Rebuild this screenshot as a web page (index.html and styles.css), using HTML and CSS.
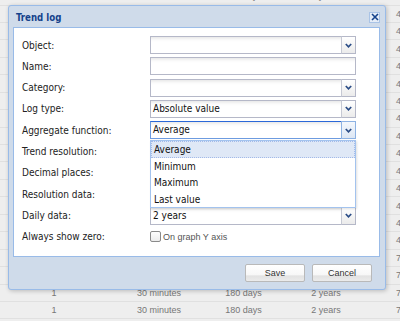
FILE: index.html
```html
<!DOCTYPE html>
<html>
<head>
<meta charset="utf-8">
<link rel="stylesheet" href="styles.css">
</head>
<body>
<div class="grid">
  <div class="row"><span class="c1">2</span><span class="c2">5 minutes</span><span class="c3">180 days</span><span class="c4">2 years</span><span class="c5">4</span></div>
  <div class="row"><span class="c1"></span><span class="c2"></span><span class="c3"></span><span class="c4"></span><span class="c5">4</span></div>
  <div class="row"><span class="c1"></span><span class="c2"></span><span class="c3"></span><span class="c4"></span><span class="c5">4</span></div>
  <div class="row"><span class="c1"></span><span class="c2"></span><span class="c3"></span><span class="c4"></span><span class="c5">4</span></div>
  <div class="row"><span class="c1"></span><span class="c2"></span><span class="c3"></span><span class="c4"></span><span class="c5">4</span></div>
  <div class="row"><span class="c1"></span><span class="c2"></span><span class="c3"></span><span class="c4"></span><span class="c5">4</span></div>
  <div class="row"><span class="c1"></span><span class="c2"></span><span class="c3"></span><span class="c4"></span><span class="c5">4</span></div>
  <div class="row"><span class="c1"></span><span class="c2"></span><span class="c3"></span><span class="c4"></span><span class="c5">4</span></div>
  <div class="row"><span class="c1"></span><span class="c2"></span><span class="c3"></span><span class="c4"></span><span class="c5">4</span></div>
  <div class="row"><span class="c1"></span><span class="c2"></span><span class="c3"></span><span class="c4"></span><span class="c5">4</span></div>
  <div class="row"><span class="c1"></span><span class="c2"></span><span class="c3"></span><span class="c4"></span><span class="c5">4</span></div>
  <div class="row"><span class="c1"></span><span class="c2"></span><span class="c3"></span><span class="c4"></span><span class="c5">4</span></div>
  <div class="row"><span class="c1"></span><span class="c2"></span><span class="c3"></span><span class="c4"></span><span class="c5">4</span></div>
  <div class="row"><span class="c1"></span><span class="c2"></span><span class="c3"></span><span class="c4"></span><span class="c5">4</span></div>
  <div class="row"><span class="c1"></span><span class="c2"></span><span class="c3"></span><span class="c4"></span><span class="c5">4</span></div>
  <div class="row"><span class="c1"></span><span class="c2"></span><span class="c3"></span><span class="c4"></span><span class="c5">7</span></div>
  <div class="row"><span class="c1"></span><span class="c2"></span><span class="c3"></span><span class="c4"></span><span class="c5">7</span></div>
  <div class="row"><span class="c1">1</span><span class="c2">30 minutes</span><span class="c3">180 days</span><span class="c4">2 years</span><span class="c5">7</span></div>
  <div class="row"><span class="c1">1</span><span class="c2">30 minutes</span><span class="c3">180 days</span><span class="c4">2 years</span><span class="c5">7</span></div>
  <div class="row"><span class="c1"></span><span class="c2"></span><span class="c3"></span><span class="c4"></span><span class="c5"></span></div>
</div>

<div class="window">
  <div class="header">
    <span class="title">Trend log</span>
    <span class="close"><svg width="8" height="8" viewBox="0 0 8 8"><path d="M1 1L7 7M7 1L1 7" stroke="#15428b" stroke-width="1.6" fill="none"/></svg></span>
  </div>
  <div class="body">
    <div class="frow"><span class="label">Object:</span><div class="field combo"><span class="input"></span><span class="trigger"><svg width="7" height="5" viewBox="0 0 7 5"><path d="M0.8 1L3.5 3.8L6.2 1" stroke="#2a4c86" stroke-width="1.7" fill="none"/></svg></span></div></div>
    <div class="frow"><span class="label">Name:</span><div class="field"><span class="input"></span></div></div>
    <div class="frow"><span class="label">Category:</span><div class="field combo"><span class="input"></span><span class="trigger"><svg width="7" height="5" viewBox="0 0 7 5"><path d="M0.8 1L3.5 3.8L6.2 1" stroke="#2a4c86" stroke-width="1.7" fill="none"/></svg></span></div></div>
    <div class="frow"><span class="label">Log type:</span><div class="field combo"><span class="input">Absolute value</span><span class="trigger"><svg width="7" height="5" viewBox="0 0 7 5"><path d="M0.8 1L3.5 3.8L6.2 1" stroke="#2a4c86" stroke-width="1.7" fill="none"/></svg></span></div></div>
    <div class="frow"><span class="label">Aggregate function:</span><div class="field combo focus"><span class="input">Average</span><span class="trigger"><svg width="7" height="5" viewBox="0 0 7 5"><path d="M0.8 1L3.5 3.8L6.2 1" stroke="#2a4c86" stroke-width="1.7" fill="none"/></svg></span>
      <div class="list">
        <div class="item sel">Average</div>
        <div class="item">Minimum</div>
        <div class="item">Maximum</div>
        <div class="item">Last value</div>
      </div>
    </div></div>
    <div class="frow"><span class="label">Trend resolution:</span><div class="field combo"><span class="input"></span><span class="trigger"></span></div></div>
    <div class="frow"><span class="label">Decimal places:</span><div class="field combo"><span class="input"></span><span class="trigger"></span></div></div>
    <div class="frow"><span class="label">Resolution data:</span><div class="field combo"><span class="input"></span><span class="trigger"></span></div></div>
    <div class="frow"><span class="label">Daily data:</span><div class="field combo"><span class="input">2 years</span><span class="trigger"><svg width="7" height="5" viewBox="0 0 7 5"><path d="M0.8 1L3.5 3.8L6.2 1" stroke="#2a4c86" stroke-width="1.7" fill="none"/></svg></span></div></div>
    <div class="frow"><span class="label">Always show zero:</span><div class="check"><span class="box"></span><span class="ctext">On graph Y axis</span></div></div>
  </div>
  <div class="footer">
    <span class="btn">Save</span>
    <span class="btn">Cancel</span>
  </div>
</div>
</body>
</html>
```
FILE: styles.css
```css
html, body {
  margin: 0;
  padding: 0;
}
body {
  width: 400px;
  height: 321px;
  overflow: hidden;
  background: #eeeeee;
  position: relative;
  font-family: "DejaVu Sans Condensed", "DejaVu Sans", sans-serif;
}
.grid {
  margin-top: -11.9px;
  width: 400px;
  overflow: hidden;
}
.row {
  height: 17.45px;
  box-sizing: border-box;
  border-bottom: 1px solid #e0e0e0;
  display: flex;
  align-items: center;
  font-family: "Liberation Sans", Arial, sans-serif;
  font-size: 9px;
  color: #777;
  white-space: nowrap;
}
.row span { text-align: center; flex: none; }
.c1 { width: 108px; }
.c2 { width: 102px; }
.c3 { width: 67px; }
.c4 { width: 98px; }
.row .c5 { width: 25px; text-align: left; padding-left: 21px; box-sizing: border-box; overflow: hidden; }

.window {
  position: absolute;
  left: 8px;
  top: 5px;
  width: 378px;
  height: 285px;
  box-sizing: border-box;
  border: 1px solid #99bbe8;
  border-radius: 3px;
  background: #cfdbea;
  box-shadow: 1px 1px 4px rgba(0,0,0,0.22);
  padding: 0 5px 0 4px;
  display: flex;
  flex-direction: column;
}
.header {
  height: 21px;
  display: flex;
  align-items: center;
  justify-content: space-between;
  padding: 0 0 0 3px;
  flex: none;
}
.title {
  font-weight: bold;
  font-size: 9.6px;
  color: #15428b;
  padding-top: 1px;
}
.close {
  width: 9px;
  height: 9px;
  border: 1px solid #a9c3e6;
  background: #e4ecf7;
  display: flex;
  align-items: center;
  justify-content: center;
  margin-top: 1px;
}
.body {
  height: 230px;
  box-sizing: border-box;
  border: 1px solid #99bbe8;
  background: #fff;
  padding: 8px 0 0 8px;
  flex: none;
}
.frow {
  height: 18px;
  margin-bottom: 3.33px;
  display: flex;
  align-items: center;
}
.label {
  width: 128px;
  flex: none;
  font-size: 10px;
  color: #222;
}
.field {
  width: 206px;
  height: 18px;
  display: flex;
  position: relative;
  flex: none;
}
.input {
  flex: 1;
  box-sizing: border-box;
  height: 18px;
  border: 1px solid #b5b8c8;
  background: linear-gradient(#e9e9e9 0, #fbfbfb 3px, #fff 5px);
  font-size: 10px;
  color: #111;
  padding-left: 2px;
  line-height: 16px;
}
.trigger {
  width: 15px;
  flex: none;
  box-sizing: border-box;
  height: 18px;
  border: 1px solid #b5b8c8;
  border-left: 1px solid #c6c9d4;
  background: linear-gradient(#ffffff, #ebebeb);
  display: flex;
  align-items: center;
  justify-content: center;
}
.combo .input { border-right: none; }
.focus .input {
  border-color: #6d9be0;
  border-top: 1px solid #2b68d8;
}
.focus .trigger {
  border-color: #8db2e3;
  background: linear-gradient(#f4f8fd, #dde7f4);
}
.list {
  position: absolute;
  left: 0;
  top: 100%;
  margin-top: 1px;
  width: 206px;
  box-sizing: border-box;
  border: 1px solid #a3c3ee;
  background: #fff;
  box-shadow: 1px 1px 2px rgba(0,0,0,0.12);
  z-index: 2;
}
.item {
  height: 16.5px;
  box-sizing: border-box;
  line-height: 15px;
  padding-left: 2px;
  font-size: 10px;
  color: #111;
  border: 1px solid transparent;
}
.item.sel {
  background: #dfe8f6;
  border: 1px dotted #a3bae9;
}
.check {
  display: flex;
  align-items: center;
}
.box {
  width: 11px;
  height: 11px;
  box-sizing: border-box;
  border: 1px solid #8a8a8a;
  border-radius: 2px;
  background: linear-gradient(#fdfdfd, #ececec);
  margin-right: 2px;
}
.ctext {
  font-family: "Liberation Sans", Arial, sans-serif;
  font-size: 9px;
  color: #555;
}
.footer {
  flex: 1;
  display: flex;
  justify-content: flex-end;
  align-items: flex-start;
  padding: 7px 8px 0 0;
  gap: 7px;
}
.btn {
  width: 60px;
  height: 18px;
  box-sizing: border-box;
  border: 1px solid #b9b9b9;
  border-radius: 2px;
  background: linear-gradient(#ffffff 0, #f7f7f7 65%, #e2e2e2 66%, #ebebeb 100%);
  font-family: "Liberation Sans", Arial, sans-serif;
  font-size: 9px;
  color: #333;
  display: flex;
  align-items: center;
  justify-content: center;
}
```
